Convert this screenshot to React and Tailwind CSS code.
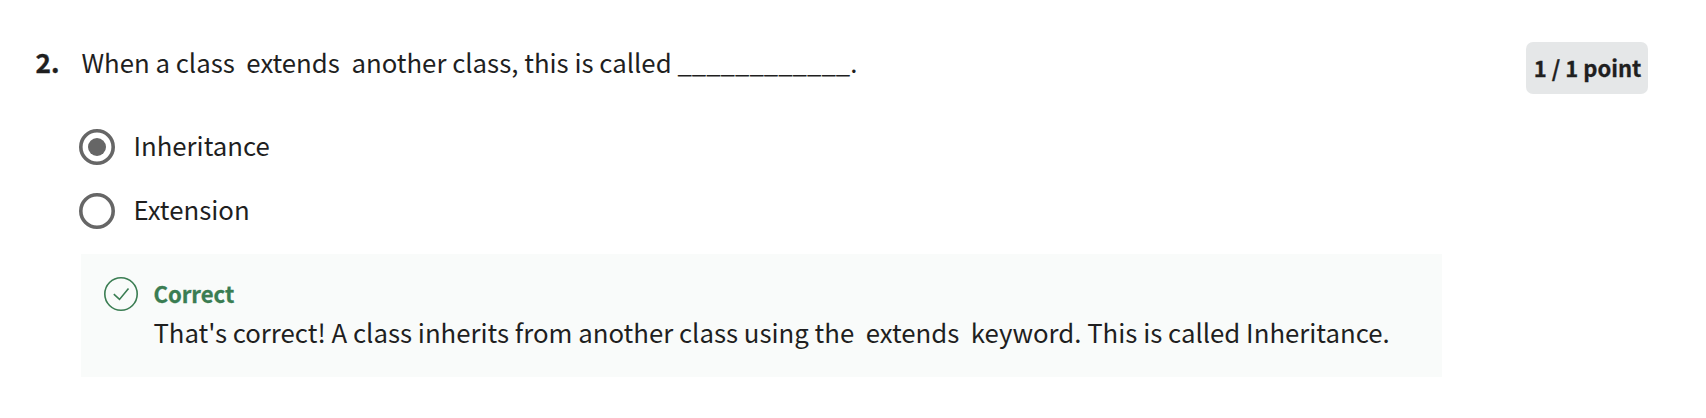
const options = [
  { label: 'Inheritance', checked: true },
  { label: 'Extension', checked: false },
];

function Radio({ checked }) {
  return (
    <svg className="size-9 shrink-0" viewBox="0 0 36 36" fill="none" aria-hidden="true">
      <circle cx="18" cy="18" r="16.2" stroke="#666666" strokeWidth="3.6" />
      {checked && <circle cx="18" cy="18" r="9" fill="#666666" />}
    </svg>
  );
}

function CorrectIcon() {
  return (
    <svg className="mt-[23px] size-[34px] shrink-0" viewBox="0 0 34 34" fill="none" stroke="#3a7d52" strokeWidth="1.6" aria-hidden="true">
      <circle cx="17" cy="17" r="16.2" />
      <path d="M9.8 17.2 15.5 22.4 24.5 11.4" />
    </svg>
  );
}

export default function App() {
  return (
    <main className="flex h-[418px] w-full items-start bg-white pl-[35px] text-[25.78px] leading-9 text-[#1f1f1f] font-['Noto_Sans_CJK_SC',sans-serif]">
      <div className="w-[46px] shrink-0 pl-[0.6px] pt-11 text-[26.2px] font-bold [-webkit-text-stroke:0.35px]">2.</div>
      <section className="w-[1361px] shrink-0 pt-11">
        <h2 className="whitespace-pre pl-[0.4px]">When a class  extends  another class, this is called ____________.</h2>
        <ul className="-ml-[1.6px] flex flex-col gap-7 pt-[47px]">
          {options.map((option) => (
            <li key={option.label} className="flex h-9 items-start gap-[18px]">
              <div className="flex pt-[2px]">
                <Radio checked={option.checked} />
              </div>
              <span>{option.label}</span>
            </li>
          ))}
        </ul>
        <div className="mt-[27px] flex h-[123px] items-start gap-[15px] bg-[#f9fbfa] pl-[23px]">
          <CorrectIcon />
          <div className="pl-[0.4px] pt-[21px]">
            <p className="text-[22.1px] font-bold text-[#3a7d52] [-webkit-text-stroke:0.3px]">Correct</p>
            <p className="mt-[3px] whitespace-pre">That's correct! A class inherits from another class using the  extends  keyword. This is called Inheritance.</p>
          </div>
        </div>
      </section>
      <div className="ml-[84px] mt-[42px] h-[52px] w-[122px] shrink-0 whitespace-nowrap rounded-[7px] bg-[#e5e7e8] pl-[7.8px] pt-[7px] text-[22px] font-bold [-webkit-text-stroke:0.3px]">
        1 / 1 point
      </div>
    </main>
  );
}
